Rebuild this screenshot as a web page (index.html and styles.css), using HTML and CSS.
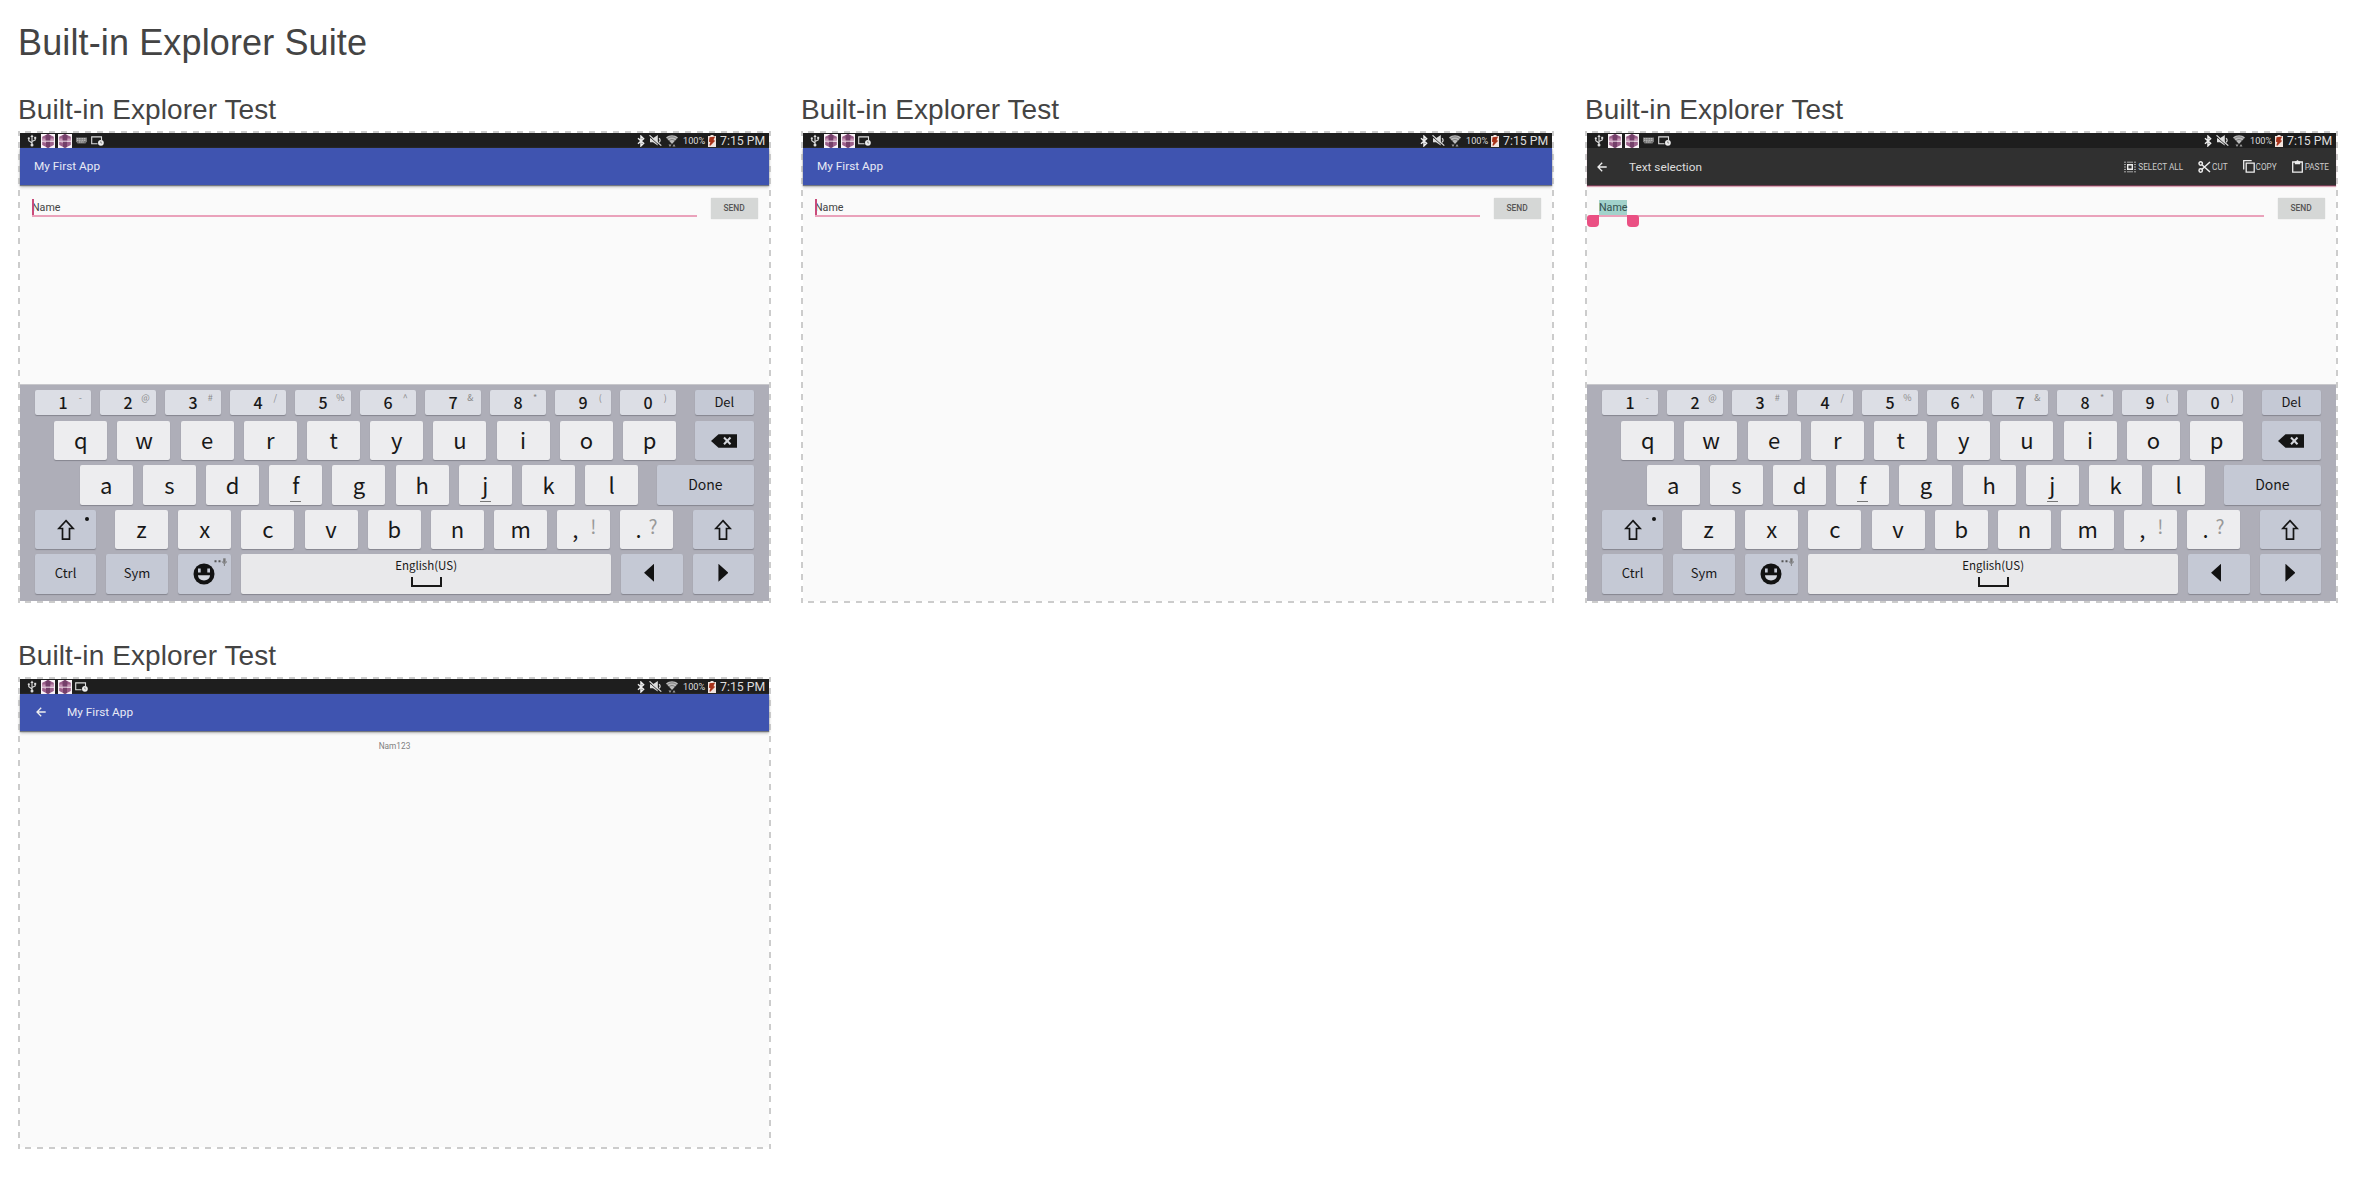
FILE: index.html
```html
<!DOCTYPE html>
<html lang="en">
<head>
<meta charset="utf-8">
<title>Built-in Explorer Suite</title>
<link rel="stylesheet" href="styles.css">
</head>
<body>
<svg class="defs" aria-hidden="true">
  <symbol id="usb" viewBox="0 0 10 13"><path d="M5 2v9M5 9L1.8 6.8V4.6M5 7.6l3.2-1.6V3.6" fill="none" stroke="#ddd" stroke-width="1.1"/><path d="M3.4 3L5 .4 6.6 3z" fill="#ddd"/><circle cx="5" cy="11" r="1.5" fill="#ddd"/><circle cx="1.8" cy="4.3" r="1.1" fill="#ddd"/><path d="M7.2 2.8h2v2h-2z" fill="#ddd"/></symbol>
  <symbol id="gem" viewBox="0 0 14 14"><path d="M0 0h14v14H0z" fill="#fbf4f8"/><path d="M7 0l5.800 2.800v3.600H1.200V2.800zM1.200 7.700h11.600v3.300L7 14l-5.800-3z" fill="#9c608b"/><path d="M4.600 1.200L7 0l2.400 1.200V6.400H4.600zM5 7.700h4v5.300l-2 1-2-1z" fill="#74406a"/><path d="M1.200 4.500h3.200v1.900H1.200zM9.400 4.500h3.400v1.900H9.400zM1.200 7.700H5v1.500z" fill="#c795b6"/></symbol>
  <symbol id="kbd" viewBox="0 0 11 7"><path d="M0 .5h11v3.800L9.500 6.500h-8L0 4.300z" fill="#777"/><path d="M1 1.700h9M1 3.300h9M3 5h5" stroke="#ccc" stroke-width=".9" stroke-dasharray="1.200 .5"/></symbol>
  <symbol id="cast" viewBox="0 0 13 10"><path d="M6.500 7.700H.7V.9h9.800v3" fill="none" stroke="#ddd" stroke-width="1.100"/><circle cx="9.900" cy="6.800" r="2.900" fill="#eee"/><path d="M9.800 5.200v1.800h1.300" fill="none" stroke="#666" stroke-width=".7"/></symbol>
  <symbol id="bt" viewBox="0 0 8 12"><path d="M1 3.200l5.600 5L4 10.800V1.200l2.600 2.600L1 8.800" fill="none" stroke="#eee" stroke-width="1.500"/></symbol>
  <symbol id="mute" viewBox="0 0 13 11"><path d="M1 3.300h3L8.800 0v10.500L4 7.300H1z" fill="#ddd"/><path d="M.5 1.500l11 10" stroke="#1e1e1e" stroke-width="1"/><path d="M.5.300l11.800 10.300M10 3.200c1.500 1 1.500 3 0 4" fill="none" stroke="#ddd" stroke-width="1.200"/></symbol>
  <symbol id="wifi" viewBox="0 0 12 12"><path d="M0 2.600C3.500-.6 8.500-.6 12 2.600L6 9z" fill="#bbb"/><path d="M1.200 3.800c3-2.500 6.600-2.500 9.600 0M3 5.700c2-1.600 4-1.600 6 0" fill="none" stroke="#555" stroke-width=".6"/><path d="M2.500 9.500h3L4 12zM6.500 11.500h3L8 9z" fill="#999"/></symbol>
  <symbol id="batt" viewBox="0 0 8 12"><path d="M2.500 0h3v1H8v11H0V1h2.500z" fill="#f1e4de"/><path d="M6.200 2.200l-4.200.6-.4 3.600 1.500.2-1.200 3.700 4.300-4.200-1.500-.5z" fill="#a8321a" stroke="#a8321a" stroke-width="1.100"/></symbol>
  <symbol id="back" viewBox="0 0 10 10"><path d="M9.700 5H1.200M5.200.8L1 5l4.200 4.200" fill="none" stroke="#eee" stroke-width="1.300"/></symbol>
  <symbol id="selall" viewBox="0 0 12 12"><path d="M0 1.200h2M3 1.200h6M10 1.200h2M0 10.800h2M3 10.800h6M10 10.800h2M0 3.600h2M0 6h2M0 8.400h2M10 3.600h2M10 6h2M10 8.400h2" stroke="#aaa" stroke-width="1"/><path d="M3.700 3.700h4.600v4.600H3.700z" fill="none" stroke="#eee" stroke-width="1.400"/></symbol>
  <symbol id="cut" viewBox="0 0 13 12"><g fill="none" stroke="#eee" stroke-width="1.500"><circle cx="2.700" cy="2.500" r="1.700"/><circle cx="2.700" cy="9.500" r="1.700"/><path d="M4 3.800l8 7.200M4 8.200l8-7.200"/></g></symbol>
  <symbol id="copy" viewBox="0 0 12 13"><path d="M.7 9.500V.700h8M3.200 3.100h8v9.100h-8z" fill="none" stroke="#eee" stroke-width="1.300"/></symbol>
  <symbol id="paste" viewBox="0 0 11 13"><path d="M.7 2h9.600v10.200H.7z" fill="none" stroke="#eee" stroke-width="1.300"/><path d="M2.800 1.300h1.500C4.500-.2 6.500-.2 6.700 1.300h1.500v2.900H2.800z" fill="#eee"/></symbol>
  <symbol id="shift" viewBox="0 0 18 22"><path d="M9 1.700l7.200 7.800h-3.700v10.700h-7V9.500H1.800z" fill="none" stroke="#151515" stroke-width="1.700"/></symbol>
  <symbol id="bksp" viewBox="0 0 26 14"><path d="M0 7L7.500.300H26v13.400H7.500z" fill="#151515"/><path d="M13 3.500l6.500 6.800M19.500 3.500L13 10.300" stroke="#d4d6dc" stroke-width="2"/></symbol>
  <symbol id="smile" viewBox="0 0 22 22"><circle cx="11" cy="11" r="10.500" fill="#121212"/><path d="M5 5.500h2.700v4H5zM14.300 5.500H17v4h-2.700z" fill="#c5c9d5"/><path d="M5 12.300h12c0 3-2.500 5.200-6 5.200s-6-2.200-6-5.200z" fill="#d3d6de"/></symbol>
  <symbol id="mic" viewBox="0 0 13 8"><path d="M.5 2.300h2v2h-2zM4.500 2.300h2v2h-2z" fill="#555"/><path d="M9.200.3h2.400v4.500H9.200z" fill="#777"/><path d="M8.200 3.300c.3 2.800 4.200 2.800 4.500 0M10.400 5.500V8" fill="none" stroke="#777" stroke-width=".9"/></symbol>
</svg>

<h1>Built-in Explorer Suite</h1>
<main class="gallery">
  <section class="shot">
    <h2>Built-in Explorer Test</h2>
    <div class="frame"><div class="screen">
      <div class="status"><svg class="i-usb"><use href="#usb"/></svg><svg class="i-gem"><use href="#gem"/></svg><svg class="i-gem"><use href="#gem"/></svg><svg class="i-kbd"><use href="#kbd"/></svg><svg class="i-cast"><use href="#cast"/></svg><span class="tray"><svg class="i-bt"><use href="#bt"/></svg><svg class="i-mute"><use href="#mute"/></svg><svg class="i-wifi"><use href="#wifi"/></svg><span class="pct">100%</span><svg class="i-batt"><use href="#batt"/></svg><span class="time">7:15 PM</span></span></div>
      <div class="appbar"><span>My First App</span></div>
      <div class="form"><div class="field"><i class="caret"></i>Name</div><div class="send">SEND</div></div>
      <div class="keyboard"></div>
    </div></div>
  </section>
  <section class="shot">
    <h2>Built-in Explorer Test</h2>
    <div class="frame"><div class="screen">
      <div class="status"><svg class="i-usb"><use href="#usb"/></svg><svg class="i-gem"><use href="#gem"/></svg><svg class="i-gem"><use href="#gem"/></svg><svg class="i-cast"><use href="#cast"/></svg><span class="tray"><svg class="i-bt"><use href="#bt"/></svg><svg class="i-mute"><use href="#mute"/></svg><svg class="i-wifi"><use href="#wifi"/></svg><span class="pct">100%</span><svg class="i-batt"><use href="#batt"/></svg><span class="time">7:15 PM</span></span></div>
      <div class="appbar"><span>My First App</span></div>
      <div class="form"><div class="field"><i class="caret"></i>Name</div><div class="send">SEND</div></div>
    </div></div>
  </section>
  <section class="shot">
    <h2>Built-in Explorer Test</h2>
    <div class="frame"><div class="screen">
      <div class="status"><svg class="i-usb"><use href="#usb"/></svg><svg class="i-gem"><use href="#gem"/></svg><svg class="i-gem"><use href="#gem"/></svg><svg class="i-kbd"><use href="#kbd"/></svg><svg class="i-cast"><use href="#cast"/></svg><span class="tray"><svg class="i-bt"><use href="#bt"/></svg><svg class="i-mute"><use href="#mute"/></svg><svg class="i-wifi"><use href="#wifi"/></svg><span class="pct">100%</span><svg class="i-batt"><use href="#batt"/></svg><span class="time">7:15 PM</span></span></div>
      <div class="appbar selecting"><svg class="i-back"><use href="#back"/></svg><span>Text selection</span>
        <div class="actions"><span class="action"><svg class="i-selall"><use href="#selall"/></svg>SELECT ALL</span><span class="action"><svg class="i-cut"><use href="#cut"/></svg>CUT</span><span class="action"><svg class="i-copy"><use href="#copy"/></svg>COPY</span><span class="action"><svg class="i-paste"><use href="#paste"/></svg>PASTE</span></div>
      </div>
      <div class="form"><div class="field"><mark>Name</mark><i class="handle start"></i><i class="handle end"></i></div><div class="send">SEND</div></div>
      <div class="keyboard"></div>
    </div></div>
  </section>
  <section class="shot">
    <h2>Built-in Explorer Test</h2>
    <div class="frame"><div class="screen">
      <div class="status"><svg class="i-usb"><use href="#usb"/></svg><svg class="i-gem"><use href="#gem"/></svg><svg class="i-gem"><use href="#gem"/></svg><svg class="i-cast"><use href="#cast"/></svg><span class="tray"><svg class="i-bt"><use href="#bt"/></svg><svg class="i-mute"><use href="#mute"/></svg><svg class="i-wifi"><use href="#wifi"/></svg><span class="pct">100%</span><svg class="i-batt"><use href="#batt"/></svg><span class="time">7:15 PM</span></span></div>
      <div class="appbar nested"><svg class="i-back"><use href="#back"/></svg><span>My First App</span></div>
      <p class="message">Nam123</p>
    </div></div>
  </section>
</main>

<template id="keys">
  <div class="row numbers"><b class="key">1<sup>-</sup></b><b class="key">2<sup>@</sup></b><b class="key">3<sup>#</sup></b><b class="key">4<sup>/</sup></b><b class="key">5<sup>%</sup></b><b class="key">6<sup>^</sup></b><b class="key">7<sup>&amp;</sup></b><b class="key">8<sup>*</sup></b><b class="key">9<sup>(</sup></b><b class="key">0<sup>)</sup></b><b class="key fn edge small">Del</b></div>
  <div class="row top"><b class="key">q</b><b class="key">w</b><b class="key">e</b><b class="key">r</b><b class="key">t</b><b class="key">y</b><b class="key">u</b><b class="key">i</b><b class="key">o</b><b class="key">p</b><b class="key fn edge"><svg class="i-bksp"><use href="#bksp"/></svg></b></div>
  <div class="row home"><b class="key">a</b><b class="key">s</b><b class="key">d</b><b class="key bump">f</b><b class="key">g</b><b class="key">h</b><b class="key bump">j</b><b class="key">k</b><b class="key">l</b><b class="key fn edge done">Done</b></div>
  <div class="row bottom"><b class="key fn mod first"><svg class="i-shift"><use href="#shift"/></svg><i class="dot"></i></b><b class="key">z</b><b class="key">x</b><b class="key">c</b><b class="key">v</b><b class="key">b</b><b class="key">n</b><b class="key">m</b><b class="key punct comma">,<sup>!</sup></b><b class="key punct">.<sup>?</sup></b><b class="key fn mod edge"><svg class="i-shift"><use href="#shift"/></svg></b></div>
  <div class="row"><b class="key fn mod small">Ctrl</b><b class="key fn mod small">Sym</b><b class="key fn"><svg class="i-smile"><use href="#smile"/></svg><svg class="i-mic"><use href="#mic"/></svg></b><b class="key space"><span>English(US)</span><i></i></b><b class="key fn mod"><i class="arrow left"></i></b><b class="key fn mod edge"><i class="arrow right"></i></b></div>
</template>
<script src="keyboard.js"></script>
</body>
</html>
```
FILE: keyboard.js
```js
const keys = document.getElementById('keys');
document.querySelectorAll('.keyboard').forEach(function (board) {
  board.appendChild(keys.content.cloneNode(true));
});
```
FILE: styles.css
```css
* { box-sizing: border-box; }
body { margin: 0; padding: 22px 18px 0; background: #fff; color: #444; font-family: "Liberation Sans", Arial, sans-serif; }
.defs { display: none; }
svg { display: block; flex: none; }
i { font-style: normal; }

h1 { margin: 0; font-size: 36px; line-height: 42px; font-weight: 400; letter-spacing: .13px; }
h2 { margin: 0; height: 36px; padding-top: 1px; font-size: 28px; line-height: 28px; font-weight: 400; letter-spacing: .09px; }
.gallery { display: grid; grid-template-columns: 783px 784px 753px; row-gap: 38px; padding-top: 31px; }
.shot { width: 753px; }

/* dashed outline, 6px dash and 6px gap */
.frame {
  --h: repeating-linear-gradient(90deg, #ccc 0 1px, #fff 1px 7px, #ccc 7px 12px);
  --v: repeating-linear-gradient(180deg, #ccc 0 5px, #fff 5px 11px, #ccc 11px 12px);
  padding: 2px;
  height: 472px;
  background: var(--v) 0 0 / 2px 100% no-repeat, var(--v) 100% 0 / 2px 100% no-repeat, var(--h) 0 0 / 100% 2px no-repeat, var(--h) 0 100% / 100% 2px no-repeat;
}
.screen { display: flex; flex-direction: column; height: 468px; background: #fafafa; font-family: Roboto, sans-serif; }

.status { display: flex; align-items: center; height: 15px; padding: 0 3px 0 7px; background: #1e1e1e; color: #ddd; }
.i-usb { width: 10px; height: 13px; margin-right: 4px; }
.i-gem { width: 14px; height: 14px; margin-right: 3px; }
.i-kbd { width: 11px; height: 7px; margin: 0 4px 0 1px; }
.i-cast { width: 13px; height: 10px; }
.tray { display: flex; align-items: center; margin-left: auto; height: 15px; }
.i-bt { width: 8px; height: 12px; margin-right: 4px; }
.i-mute { width: 13px; height: 11px; margin-right: 4px; }
.i-wifi { width: 12px; height: 12px; margin-right: 6px; }
.pct { width: 24px; margin-left: -1px; margin-right: 1px; font-size: 9.2px; line-height: 14px; white-space: nowrap; }
.i-batt { width: 8px; height: 12px; margin-right: 4px; }
.time { width: 46px; font-size: 12.3px; line-height: 14px; white-space: nowrap; }

.appbar { display: flex; align-items: center; height: 37px; padding: 0 0 1px 14px; background: #3f54b0; color: #e8eaf5; font-size: 11.8px; box-shadow: 0 1px 1px #73777f, 0 2px 3px #bbb; }
.appbar.nested { padding-left: 16px; }
.i-back { width: 10px; height: 10px; margin-right: 21px; }
.appbar.selecting { padding: 0 7px 0 10px; background: #303030; color: #ddd; box-shadow: 0 1px 0 #6e3c50, 0 2px 1px #d9a5b5; }
.selecting .i-back { margin-right: 22px; }
.actions { display: flex; gap: 15px; margin-left: auto; font-size: 8.2px; }
.action { display: flex; align-items: center; height: 14px; gap: 1px; color: #ccc; }
.i-selall { width: 12px; height: 12px; margin-right: 1px; }
.i-cut { width: 13px; height: 12px; }
.i-copy { width: 12px; height: 13px; }
.i-paste { width: 11px; height: 13px; margin-right: 1px; }

.form { display: flex; align-items: flex-start; padding: 12px 11px 0 12px; }
.field { position: relative; width: 664.5px; height: 20px; padding-top: 3px; border-bottom: 2px solid #eaa2bb; color: #444; font-size: 10.7px; line-height: 16px; }
.caret { position: absolute; left: 0; top: 2px; width: 1.5px; height: 16px; background: #c94b7a; }
mark { display: inline-block; height: 15px; background: #a2d2cb; color: #33504e; line-height: 15px; }
.handle { position: absolute; top: 18px; width: 12px; height: 12px; background: #ea5083; }
.handle.start { left: -12px; border-radius: 3px 0 4px 4px; }
.handle.end { left: 28px; border-radius: 0 3px 4px 4px; }
.send { width: 47px; height: 21px; margin: 1px 0 0 14px; border-radius: 1px; background: #d5d7d6; box-shadow: 0 0 1px #bbb; color: #555; font-size: 8.4px; font-weight: 500; line-height: 21px; text-align: center; }
.message { margin: 8px 0 0; color: #808080; font-size: 8.3px; line-height: 15px; text-align: center; }

.keyboard { display: flex; flex-direction: column; gap: 5px; height: 217px; margin-top: auto; padding: 4.5px 15px 0; border-top: 1px solid #c7c7cb; background: #aeaeb8; font-family: "Noto Sans CJK SC", sans-serif; color: #181818; }
.row { display: flex; gap: 10.2px; height: 39.5px; }
.numbers { gap: 8.7px; height: 25px; margin-bottom: 1px; }
.top { padding-left: 19.3px; }
.home { padding-left: 44.7px; }
.key { position: relative; display: flex; align-items: center; justify-content: center; width: 53px; flex: none; border-radius: 2px; background: #ededef; box-shadow: 0 1px 1px #85858f; font-size: 22px; font-weight: 400; line-height: 30px; padding-bottom: 2px; }
.numbers .key { width: 56.3px; background: #dcdee5; font-size: 16px; font-weight: 500; padding: 0; }
.numbers sup { position: absolute; right: 7px; top: 2px; width: 8px; color: #888; font-size: 9px; font-weight: 400; line-height: 11px; text-align: center; }
.key.fn, .numbers .key.fn { background: #c5c9d5; }
.key.edge, .numbers .key.edge { width: 59.3px; margin-left: auto; }
.key.small, .numbers .key.small { font-size: 13px; font-weight: 400; }
.key.done { width: 97.3px; font-size: 14px; }
.key.mod, .key.mod.edge { width: 61.2px; }
.key.first { margin-right: 8.6px; }
.bump::after { content: ""; position: absolute; left: 21px; bottom: 3px; width: 11px; height: 1px; background: #777; }
.punct { padding-right: 17px; }
.punct sup { position: absolute; left: 28px; top: 1px; color: #999; font-size: 19px; line-height: 30px; }
.comma sup { left: 33px; }
.dot { position: absolute; right: 7px; top: 7px; width: 4px; height: 4px; border-radius: 50%; background: #151515; }
.i-shift { width: 18px; height: 22px; margin-top: 3px; }
.i-bksp { width: 26px; height: 14px; margin-top: 4px; }
.i-smile { width: 22px; height: 22px; margin-top: 2px; }
.i-mic { position: absolute; right: 4px; top: 4px; width: 13px; height: 8px; }
.key.space { flex: 1; flex-direction: column; justify-content: flex-start; background: #e9e9eb; font-size: 11.5px; line-height: 14px; padding-top: 4px; }
.space i { width: 31px; height: 10px; margin: 5px 0 0 1px; border: 2px solid #181818; border-top: 0; }
.arrow { width: 10px; height: 18px; background: #121212; }
.arrow.left { clip-path: polygon(100% 0, 100% 100%, 0 50%); margin-right: 6px; }
.arrow.right { clip-path: polygon(0 0, 0 100%, 100% 50%); }
```
